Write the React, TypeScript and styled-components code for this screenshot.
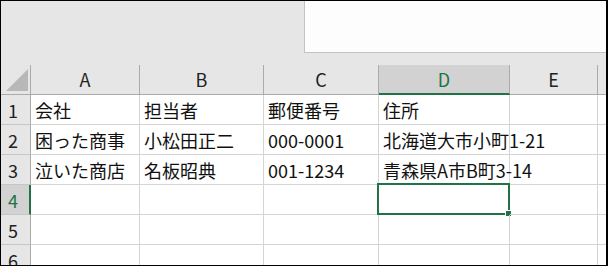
import React from "react";
import styled, { createGlobalStyle } from "styled-components";

const GREEN = "#217346";

const Global = createGlobalStyle`
  html, body { margin: 0; padding: 0; background: #fff; }
  body { font-family: "Noto Sans CJK JP", "Noto Sans", sans-serif; }
`;

const Frame = styled.div`
  box-sizing: border-box;
  width: 608px;
  height: 266px;
  border-top: 1px solid #000;
  border-left: 1px solid #000;
  border-bottom: 1px solid #000;
  border-right: 2px solid #000;
  display: flex;
  flex-direction: column;
  overflow: hidden;
  background: #fff;
`;

const Ribbon = styled.div`
  height: 64px;
  flex: none;
  background: #e6e6e6;
  display: flex;
  justify-content: flex-end;
  align-items: flex-start;
`;

const NameBox = styled.div`
  box-sizing: border-box;
  width: 302px;
  height: 52px;
  background: #fdfdfd;
  border-left: 1px solid #c3c3c3;
  border-bottom: 1px solid #c3c3c3;
`;

const Sheet = styled.div`
  flex: 1;
  display: grid;
  grid-template-columns: 30px 109px 124px 115px 131px 88px 1fr;
  grid-auto-rows: 30px;
  overflow: hidden;
  font-family: "Noto Sans CJK JP", "Noto Sans", sans-serif;
  font-size: 18px;
  color: #111;
`;

const Corner = styled.div`
  box-sizing: border-box;
  background: #e6e6e6;
  border-right: 1px solid #ababab;
  border-bottom: 1px solid #ababab;
  display: flex;
  align-items: flex-end;
  justify-content: flex-end;
  padding: 0 2px 3px 0;
`;

const Triangle = styled.div`
  width: 22px;
  height: 22px;
  background: #b8b8b8;
  clip-path: polygon(100% 0, 100% 100%, 0 100%);
`;

const ColHead = styled.div<{ $selected?: boolean; $last?: boolean }>`
  box-sizing: border-box;
  background: ${(p) => (p.$selected ? "#d2d2d2" : "#e6e6e6")};
  border-right: ${(p) => (p.$last ? "none" : "1px solid #ababab")};
  border-bottom: ${(p) => (p.$selected ? `2px solid ${GREEN}` : "1px solid #ababab")};
  color: ${(p) => (p.$selected ? GREEN : "#222")};
  display: flex;
  align-items: center;
  justify-content: center;
  padding-bottom: ${(p) => (p.$selected ? "0" : "1px")};
`;

const RowHead = styled.div<{ $selected?: boolean }>`
  box-sizing: border-box;
  background: ${(p) => (p.$selected ? "#d2d2d2" : "#e6e6e6")};
  border-right: ${(p) => (p.$selected ? `2px solid ${GREEN}` : "1px solid #ababab")};
  border-bottom: 1px solid #c6c6c6;
  color: ${(p) => (p.$selected ? GREEN : "#222")};
  display: flex;
  align-items: center;
  padding-left: 7px;
`;

const Cell = styled.div<{ $noRight?: boolean }>`
  box-sizing: border-box;
  position: relative;
  border-right: ${(p) => (p.$noRight ? "none" : "1px solid #d4d4d4")};
  border-bottom: 1px solid #d4d4d4;
  display: flex;
  align-items: center;
  padding-left: 4px;
  white-space: nowrap;
`;

const Selection = styled.div`
  position: absolute;
  left: -2px;
  top: -2px;
  right: -1px;
  bottom: -1px;
  border: 2px solid ${GREEN};
  pointer-events: none;
`;

const Handle = styled.div`
  position: absolute;
  right: -4px;
  bottom: -4px;
  width: 5px;
  height: 5px;
  background: ${GREEN};
  border: 1px solid #fff;
`;

const cols = ["A", "B", "C", "D", "E"];
const data: string[][] = [
  ["会社", "担当者", "郵便番号", "住所", ""],
  ["困った商事", "小松田正二", "000-0001", "北海道大市小町1-21", ""],
  ["泣いた商店", "名板昭典", "001-1234", "青森県A市B町3-14", ""],
  ["", "", "", "", ""],
  ["", "", "", "", ""],
  ["", "", "", "", ""],
];

export default function App() {
  return (
    <>
      <Global />
      <Frame>
        <Ribbon>
          <NameBox />
        </Ribbon>
        <Sheet>
          <Corner>
            <Triangle />
          </Corner>
          {cols.map((c) => (
            <ColHead key={c} $selected={c === "D"}>
              {c}
            </ColHead>
          ))}
          <ColHead $last />
          {data.map((row, r) => (
            <React.Fragment key={r}>
              <RowHead $selected={r === 3}>{r + 1}</RowHead>
              {row.map((v, c) => (
                <Cell key={c}>
                  {v}
                  {r === 3 && c === 3 && (
                    <Selection>
                      <Handle />
                    </Selection>
                  )}
                </Cell>
              ))}
              <Cell $noRight />
            </React.Fragment>
          ))}
        </Sheet>
      </Frame>
    </>
  );
}
